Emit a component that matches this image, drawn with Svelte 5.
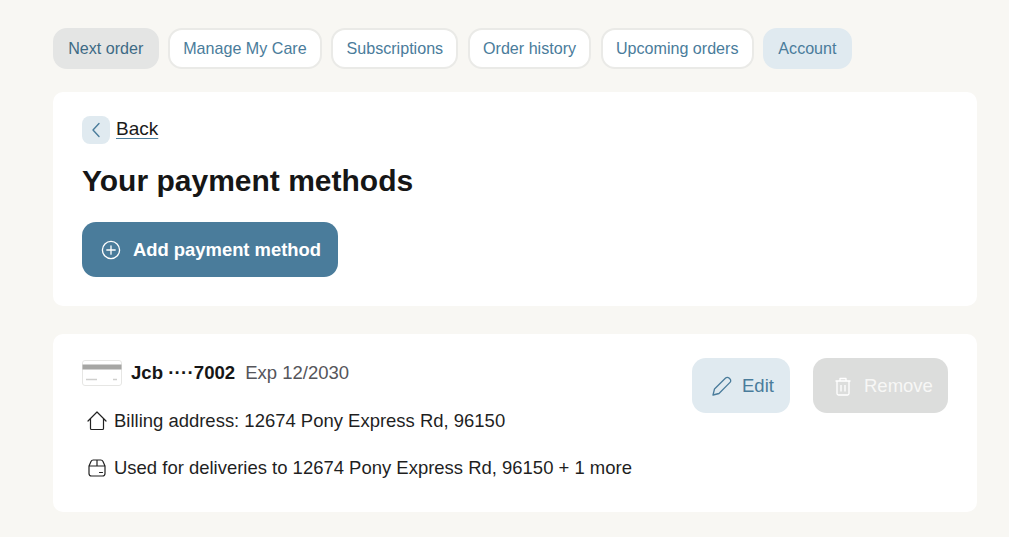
<script>
  const tabs = [
    { label: 'Next order', cls: 'current' },
    { label: 'Manage My Care', cls: '' },
    { label: 'Subscriptions', cls: '' },
    { label: 'Order history', cls: '' },
    { label: 'Upcoming orders', cls: '' },
    { label: 'Account', cls: 'active' }
  ];
</script>

<div class="page">
  <nav class="tabs">
    {#each tabs as t}
      <a class="tab {t.cls}" href="#top">{t.label}</a>
    {/each}
  </nav>

  <section class="card head">
    <div class="back">
      <span class="back-icon">
        <svg width="10" height="16" viewBox="0 0 10 16" fill="none"><path d="M8 1.500 2 8l6 6.500" stroke="#4a7c9b" stroke-width="1.400" stroke-linecap="round" stroke-linejoin="round"/></svg>
      </span>
      <a class="back-link" href="#top">Back</a>
    </div>
    <h1>Your payment methods</h1>
    <button class="add">
      <svg width="20" height="20" viewBox="0 0 20 20" fill="none"><circle cx="10" cy="10" r="8.600" stroke="#fff" stroke-width="1.300"/><path d="M10 5.800v8.400M5.800 10h8.400" stroke="#fff" stroke-width="1.300" stroke-linecap="round"/></svg>
      Add payment method
    </button>
  </section>

  <section class="card method">
    <div class="info">
      <div class="title-row">
        <svg class="card-icon" width="40" height="26" viewBox="0 0 40 26" fill="none">
          <rect x="0.500" y="0.500" width="39" height="25" rx="2.500" fill="#fff" stroke="#e6e6e4"/>
          <rect x="0.500" y="4.500" width="39" height="5" fill="#a6a6a4"/>
          <path d="M4 19.500h11M31 19.500h4" stroke="#cfcfcd" stroke-width="1.400"/>
        </svg>
        <strong>Jcb <span class="dots">····</span>7002</strong>
        <span class="exp">Exp 12/2030</span>
      </div>
      <div class="line first">
        <svg width="20" height="20" viewBox="0 0 20 20" fill="none"><path d="M1 10 10 1l9 9M3.500 8v9.500a1 1 0 0 0 1 1h11a1 1 0 0 0 1-1V8" stroke="#222" stroke-width="1.200" stroke-linejoin="round" stroke-linecap="round"/></svg>
        <span>Billing address: 12674 Pony Express Rd, 96150</span>
      </div>
      <div class="line">
        <svg width="20" height="20" viewBox="0 0 20 20" fill="none"><path d="M2 8 4 3.500A2.500 2.500 0 0 1 6.200 2h7.600A2.500 2.500 0 0 1 16 3.500L18 8v7.500a2.500 2.500 0 0 1-2.500 2.500h-11A2.500 2.500 0 0 1 2 15.500V8h16M10 2v6M12.500 14.500h3" stroke="#222" stroke-width="1.200" stroke-linecap="round" stroke-linejoin="round"/></svg>
        <span>Used for deliveries to 12674 Pony Express Rd, 96150 + 1 more</span>
      </div>
    </div>
    <div class="actions">
      <button class="edit">
        <svg width="20" height="20" viewBox="0 0 20 20" fill="none"><path d="M1 19 2.500 13 13.600 2a2.400 2.400 0 0 1 3.400 0l1 1a2.400 2.400 0 0 1 0 3.400L7 17.500 1 19Z" stroke="#4a7c9b" stroke-width="1.300" stroke-linejoin="round"/></svg>
        Edit
      </button>
      <button class="remove" disabled>
        <svg width="18" height="20" viewBox="0 0 18 20" fill="none"><path d="M1.500 5h15M3 5v12.500A1.500 1.500 0 0 0 4.500 19h9a1.500 1.500 0 0 0 1.500-1.500V5M6 5V2.500h6V5M7 9v6.500M11 9v6.500" stroke="#fff" stroke-width="1.300" stroke-linejoin="round"/></svg>
        Remove
      </button>
    </div>
  </section>
</div>

<style>
  :global(body) {
    margin: 0;
    background: #f8f7f3;
  }
  .page {
    box-sizing: border-box;
    height: 537px;
    overflow: hidden;
    padding: 28px 32px 0 53px;
    font-family: "Liberation Sans", Arial, sans-serif;
    color: #1a1a1a;
  }
  .tabs {
    display: flex;
    gap: 9.500px;
    margin-bottom: 23px;
  }
  .tab {
    box-sizing: border-box;
    height: 41px;
    display: flex;
    align-items: center;
    padding: 0 13.200px;
    border: 2px solid #eaeae7;
    border-radius: 14px;
    background: #fff;
    color: #4a7c9b;
    font-size: 16.100px;
    text-decoration: none;
    white-space: nowrap;
  }
  .tab.current {
    background: #e4e5e4;
    border-color: #e4e5e4;
    color: #3d6a85;
  }
  .tab.active {
    background: #e0eaf0;
    border-color: #e0eaf0;
  }
  .card {
    background: #fff;
    border-radius: 10px;
    padding: 24px 29px;
  }
  .head {
    height: 214px;
    box-sizing: border-box;
    margin-bottom: 28px;
  }
  .back {
    display: flex;
    align-items: center;
    gap: 6px;
    height: 28px;
  }
  .back-icon {
    width: 28px;
    height: 28px;
    border-radius: 8px;
    background: #e0eaf0;
    display: flex;
    align-items: center;
    justify-content: center;
  }
  .back-link {
    color: #1a1a1a;
    font-size: 19px;
    line-height: 24px;
    margin-top: -2px;
    text-decoration: underline;
    text-decoration-color: #4a7c9b;
    text-underline-offset: 3px;
  }
  h1 {
    margin: 19px 0 23px;
    font-size: 30px;
    line-height: 36px;
    font-weight: 700;
    color: #161616;
  }
  button {
    font-family: inherit;
    border: 0;
    display: flex;
    align-items: center;
    height: 55px;
    border-radius: 14px;
  }
  .add {
    width: 256px;
    padding: 0 0 0 19px;
    gap: 12px;
    background: #4a7c9b;
    color: #fff;
    font-size: 18.400px;
    font-weight: 700;
  }
  .method {
    box-sizing: border-box;
    height: 178px;
    padding: 24px 29px;
    display: flex;
    justify-content: space-between;
    align-items: flex-start;
  }
  .info {
    padding-top: 1px;
  }
  .title-row {
    display: flex;
    align-items: center;
    height: 28px;
    font-size: 18.500px;
  }
  .card-icon {
    margin-right: 9px;
  }
  .title-row strong {
    margin-right: 10px;
    color: #161616;
    font-size: 18.600px;
  }
  .dots {
    letter-spacing: 0.200px;
  }
  .exp {
    color: #55555a;
  }
  .line {
    display: flex;
    align-items: center;
    gap: 7px;
    margin: 23px 0 0 5px;
    height: 24px;
    font-size: 18.480px;
    color: #1f1f1f;
  }
  .line.first {
    margin-top: 22px;
  }
  .actions {
    display: flex;
    gap: 23px;
  }
  .edit, .remove {
    font-size: 18.500px;
  }
  .edit {
    width: 98px;
    padding: 0 0 0 20px;
    gap: 10px;
    background: #e0eaf0;
    color: #4a7c9b;
  }
  .remove {
    width: 135px;
    padding: 0 0 0 21px;
    gap: 12px;
    background: #dcdddc;
    color: #f7f7f6;
  }
</style>
